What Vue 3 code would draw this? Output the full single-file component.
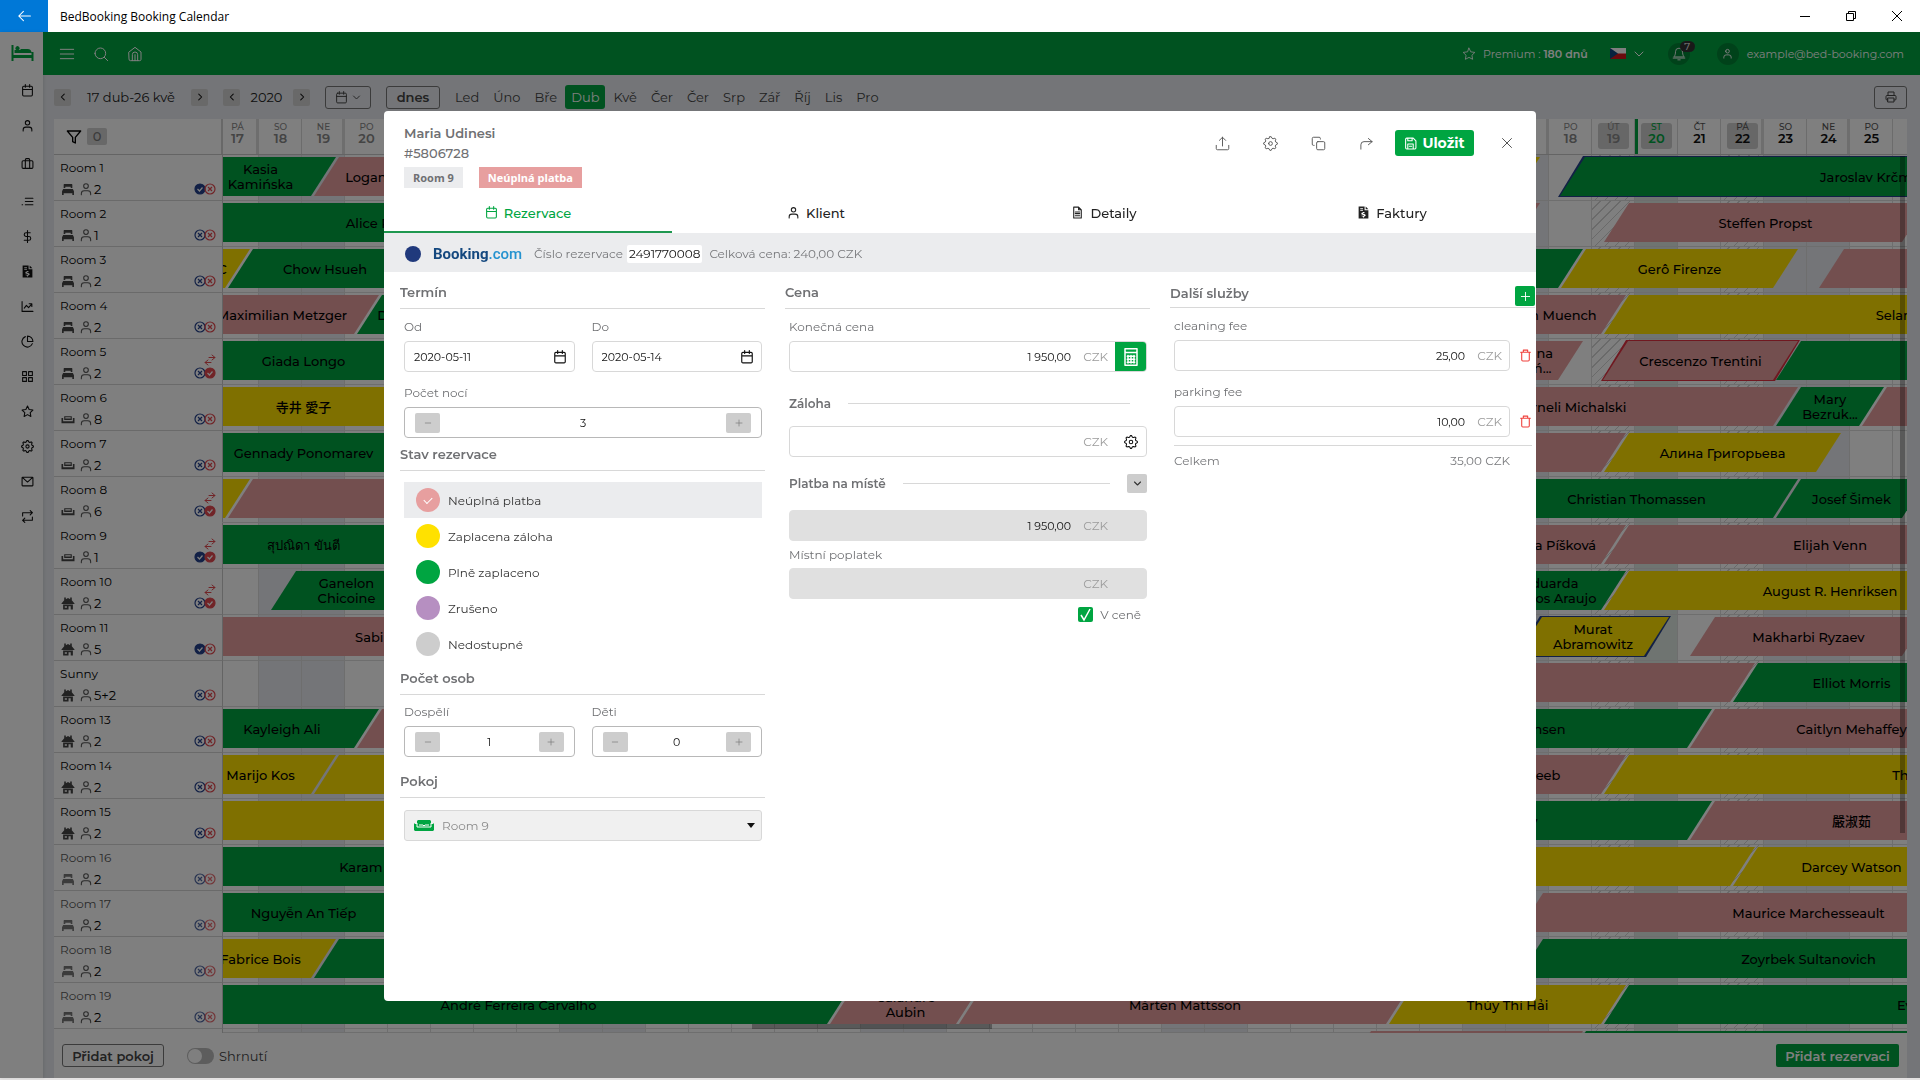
<script setup>
import { h } from 'vue'

const circle = (x, y, r) => `M${x - r} ${y}a${r} ${r} 0 1 0 ${2 * r} 0a${r} ${r} 0 1 0 ${-2 * r} 0z`
// Eight-toothed cog outline
const cog = 'M' + Array.from({ length: 32 }, (_, i) => {
  const r = i % 4 < 2 ? 11 : 8.6
  const a = ((i - 0.5) * Math.PI) / 16
  return `${(12 + r * Math.sin(a)).toFixed(1)} ${(12 - r * Math.cos(a)).toFixed(1)}`
}).join('L') + 'z'
const icons = {
  menu: 'M2 5h20M2 12h20M2 19h20',
  search: circle(11, 11, 8) + 'M17 17l5 5',
  home: 'M3 9l9-7 9 7v11a2 2 0 0 1-2 2H5a2 2 0 0 1-2-2zM8 22V13a4 4 0 0 1 8 0v9M12 13v9',
  calendar: 'M5 4h14a2 2 0 0 1 2 2v14a2 2 0 0 1-2 2H5a2 2 0 0 1-2-2V6a2 2 0 0 1 2-2zM8 1v5M16 1v5M3 10h18',
  user: circle(12, 7, 4) + 'M4 22v-2a5 5 0 0 1 5-5h6a5 5 0 0 1 5 5v2',
  case: 'M4 7h16a2 2 0 0 1 2 2v10a2 2 0 0 1-2 2H4a2 2 0 0 1-2-2V9a2 2 0 0 1 2-2zM8 21V5a2 2 0 0 1 2-2h4a2 2 0 0 1 2 2v16',
  list: 'M8 6h14M8 12h14M8 18h14M2 18h1',
  dollar: 'M12 1v22M17 5H9.500a3.500 3.500 0 0 0 0 7h5a3.500 3.500 0 0 1 0 7H6',
  chart: 'M2 3v18h20M6 15l4-5 4 4 6-7M15 7h5v5',
  pie: 'M21 16A10 10 0 1 1 8 3M22 12A10 10 0 0 0 12 2v10z',
  grid: 'M3 3h7v7H3zM14 3h7v7h-7zM14 14h7v7h-7zM3 14h7v7H3z',
  star: 'M12 2l3 6.300 7 1-5 4.900 1.200 6.900L12 17.800l-6.200 3.300L7 14.200 2 9.300l7-1z',
  gear: cog + circle(12, 12, 3),
  mail: 'M3 4h18a1 1 0 0 1 1 1v14a1 1 0 0 1-1 1H3a1 1 0 0 1-1-1V5a1 1 0 0 1 1-1zM3 5l9 8 9-8',
  sync: 'M17 1l4 4-4 4M3 11V5h18M7 23l-4-4 4-4M21 13v6H3',
  left: 'M15 5l-7 7 7 7',
  right: 'M9 5l7 7-7 7',
  down: 'M4 8l8 8 8-8',
  funnel: 'M2 3h20l-8 9.500V21l-4-2v-6.500z',
  print: 'M6 9V2h12v7M6 18H4a2 2 0 0 1-2-2v-5a2 2 0 0 1 2-2h16a2 2 0 0 1 2 2v5a2 2 0 0 1-2 2h-2M6 14h12v8H6z',
  bell: 'M18 8A6 6 0 0 0 6 8c0 7-3 9-3 9h18s-3-2-3-9M2 19h20M10 22h4',
  upload: 'M2 15v5a2 2 0 0 0 2 2h16a2 2 0 0 0 2-2v-5M7 7l5-5 5 5M12 2v14',
  copy: 'M11 9h9a2 2 0 0 1 2 2v9a2 2 0 0 1-2 2h-9a2 2 0 0 1-2-2v-9a2 2 0 0 1 2-2zM5 15H4a2 2 0 0 1-2-2V4a2 2 0 0 1 2-2h9a2 2 0 0 1 2 2v1',
  forward: 'M15 4l6 5-6 5M3 21v-7a5 5 0 0 1 5-5h13',
  save: 'M5 2h12l5 5v13a2 2 0 0 1-2 2H5a2 2 0 0 1-2-2V4a2 2 0 0 1 2-2zM7 22v-9h10v9M7 2v5h8V3M10 17h4',
  close: 'M3 3l18 18M21 3L3 21',
  plus: 'M12 3v18M3 12h18',
  minus: 'M4 12h16',
  trash: 'M3 6h18M5 6v14a2 2 0 0 0 2 2h10a2 2 0 0 0 2-2V6M8 6V2h8v4',
  file: 'M5 2h9l5 5v15H5zM14 2v5h5M8 11h8M8 14h8M8 18h8',
  swap: 'M8 22l-6-5 6-5M2 17h12M16 2l6 5-6 5M22 7H10',
  arrow: 'M11 4l-8 8 8 8M3 12h20',
  calc: 'M4 1h16v22H4zM5 6h14M7 11h10M7 15h10M7 19h10M8 10v10M12 10v10M16 10v10',
}
const solid = {
  invoice: 'M3 1h11v7h7v15H3zM16 1l5 5h-5zM6 4v2h5V4zM6 8v1h5V8zM13 11h-2v1c-2 0-3 1-3 2.500 0 3 5 1.500 5 3 0 1-3.500.5-4.500 0V19l2.500.5V21h2v-1.500c2-.3 3-1.300 3-2.500 0-3-5-2-5-3.300 0-.8 2.500-.7 3.500-.2v-1.500L13 11.800z',
  bed: 'M5 2h14a1 1 0 0 1 1 1v6h-3V7H7v2H4V3a1 1 0 0 1 1-1zM3 11h18l2 4v7h-3v-3H4v3H1v-7z',
  sofa: 'M0 9h3v6h18V9h3v10H0zM5 6h14v7H5zM7 8v1h10V8zM7 11h10v-1H7z',
  house: 'M5 1h3v3l4-2 4 2V1h3v5l5 6v1H0v-1l5-6zM3 14h18v9h-4v-6h-4v6H3zM6 17v3h4v-3z',
}
const Icon = (props) => {
  const fill = solid[props.name]
  return h('svg', { viewBox: '0 0 24 24', 'aria-hidden': 'true', fill: fill ? 'currentColor' : 'none', 'fill-rule': 'evenodd', stroke: fill ? 'none' : 'currentColor', 'stroke-width': props.weight || 2, 'stroke-linecap': 'round', 'stroke-linejoin': 'round' },
    [h('path', { d: fill || icons[props.name] })])
}
Icon.props = ['name', 'weight']

const nav = ['calendar', 'user', 'case', 'list', 'dollar', 'invoice', 'chart', 'pie', 'grid', 'star', 'gear', 'mail', 'sync']
const months = ['Led', 'Úno', 'Bře', 'Dub', 'Kvě', 'Čer', 'Čer', 'Srp', 'Zář', 'Říj', 'Lis', 'Pro']

// Day 0 is Friday 17 April; the track also holds LEAD hidden days before it.
const LEAD = 10
const weekdays = ['PÁ', 'SO', 'NE', 'PO', 'ÚT', 'ST', 'ČT']
const days = Array.from({ length: 41 }, (_, k) => ({
  k,
  wd: weekdays[k % 7],
  num: k < 14 ? k + 17 : k - 13,
  past: k < 33,
  today: k === 33,
  weekend: k % 7 === 1 || k % 7 === 2,
  edge: k % 7 === 0 || k % 7 === 2,
  holiday: k === 32 || k === 35,
  label: k < 39,
}))

// Bars: [first day, last day, colour, lines of the label, options]
const rooms = [
  { name: 'Room 1', kind: 'bed', n: '2', b: 1, bars: [[-1, 2, 'green', ['Kasia', 'Kamińska']], [2, 5, 'pink', ['Logan Brown']], [26, 30, 'yellow'], [31, 45, 'green', ['Jaroslav Krčmář'], { line: 'navy' }]] },
  { name: 'Room 2', kind: 'bed', n: '1', bars: [[-1, 8, 'green', ['Alice Roberts']], [27, 30, 'pink'], [32, 39, 'pink', ['Steffen Propst']]] },
  { name: 'Room 3', kind: 'bed', n: '2', bars: [[-3, 0, 'yellow', ['Luca Moretti CC']], [0, 4, 'green', ['Chow Hsueh']], [27, 31, 'green'], [31, 36, 'yellow', ['Gerô Firenze']], [37, 47, 'pink']] },
  { name: 'Room 4', kind: 'bed', n: '2', bars: [[-1, 3, 'pink', ['Maximilian Metzger']], [3, 5, 'green', ['Dan Miller']], [29, 32, 'pink', ['Karin Muench']], [32, 46, 'yellow', ['Selamawit T']]] },
  { name: 'Room 5', kind: 'bed', n: '2', r: 1, bars: [[-1, 4, 'green', ['Giada Longo']], [29, 31, 'pink', ['Joanna', 'Zieliń...']], [32, 36, 'pink', ['Crescenzo Trentini'], { line: 'red' }], [36, 50, 'green']] },
  { name: 'Room 6', kind: 'sofa', n: '8', bars: [[-1, 4, 'yellow', ['寺井 愛子']], [25, 36, 'pink', ['Korneli Michalski'], { shift: 40 }], [36, 38, 'green', ['Mary', 'Bezruk...']], [38, 48, 'pink']] },
  { name: 'Room 7', kind: 'sofa', n: '2', bars: [[-1, 4, 'green', ['Gennady Ponomarev']], [26, 32, 'pink'], [32, 37, 'yellow', ['Алина Григорьева']]] },
  { name: 'Room 8', kind: 'sofa', n: '6', r: 1, open: 1, bars: [[-3, 0, 'yellow'], [0, 10, 'pink'], [29, 36, 'green', ['Christian Thomassen']], [36, 39, 'green', ['Josef Šimek']]] },
  { name: 'Room 9', kind: 'sofa', n: '1', b: 1, r: 1, bars: [[-1, 4, 'green', ['สุปณิดา ขันตี']], [29, 32, 'pink', ['Alena Píšková']], [32, 42, 'pink', ['Elijah Venn']]] },
  { name: 'Room 10', kind: 'house', n: '2', r: 1, bars: [[1, 4, 'green', ['Ganelon', 'Chicoine']], [29, 32, 'green', ['Eduarda', 'Ramos Araujo']], [32, 42, 'yellow', ['August R. Henriksen']]] },
  { name: 'Room 11', kind: 'house', n: '5', b: 1, bars: [[-1, 8, 'pink', ['Sabire Kos']], [30, 33, 'yellow', ['Murat', 'Abramowitz'], { line: 'navy' }], [34, 39, 'pink', ['Makharbi Ryzaev']]] },
  { name: 'Sunny', kind: 'house', n: '5+2', bars: [[26, 35, 'pink'], [35, 40, 'green', ['Elliot Morris']]] },
  { name: 'Room 13', kind: 'house', n: '2', bars: [[-1, 3, 'green', ['Kayleigh Ali']], [3, 9, 'pink'], [25, 34, 'green', ['Emilia Johansen'], { shift: 8 }], [34, 41, 'pink', ['Caitlyn Mehaffey']]] },
  { name: 'Room 14', kind: 'house', n: '2', bars: [[-1, 2, 'yellow', ['Marijo Kos']], [2, 9, 'yellow'], [27, 32, 'pink', ['Ahmad Rakeeb'], { shift: 4 }], [32, 47, 'yellow', ['Theodor Berg']]] },
  { name: 'Room 15', kind: 'house', n: '2', bars: [[-1, 12, 'yellow'], [25, 34, 'green', ['Tomy'], { shift: 24 }], [34, 41, 'pink', ['嚴淑茹']]] },
  { name: 'Room 16', kind: 'bed', n: '2', soft: 1, bars: [[-1, 8, 'green', ['Karam Youssefi']], [26, 35, 'yellow'], [35, 40, 'yellow', ['Darcey Watson']]] },
  { name: 'Room 17', kind: 'bed', n: '2', soft: 1, bars: [[-1, 4, 'green', ['Nguyễn An Tiếp']], [30, 43, 'pink', ['Maurice Marchesseault']]] },
  { name: 'Room 18', kind: 'bed', n: '2', soft: 1, bars: [[-1, 2, 'yellow', ['Fabrice Bois']], [2, 9, 'green'], [30, 43, 'green', ['Zoyrbek Sultanovich']]] },
  { name: 'Room 19', kind: 'bed', n: '2', soft: 1, bars: [[-1, 14, 'green', ['André Ferreira Carvalho']], [14, 17, 'pink', ['Calandre', 'Aubin']], [17, 27, 'pink', ['Mårten Mattsson']], [27, 32, 'yellow', ['Thúy Thi Hải']], [32, 47, 'green', ['Eva Horákov']]] },
  { name: '', bars: [[26, 31, 'pink'], [31, 47, 'green']] },
]
const place = ([s, e]) => ({ gridColumn: `${s + LEAD + 1} / ${e + LEAD + 1}` })

const states = [
  ['Neúplná platba', '#e79f9f'],
  ['Zaplacena záloha', '#ffe100'],
  ['Plně zaplaceno', '#00a541'],
  ['Zrušeno', '#b68fc1'],
  ['Nedostupné', '#cdcdcd'],
]
const tabs = [['Rezervace', 'calendar'], ['Klient', 'user'], ['Detaily', 'file'], ['Faktury', 'invoice']]
const people = [['Dospělí', '1', 'adults'], ['Děti', '0', 'kids']]
const services = [['cleaning fee', '25,00', 'clean'], ['parking fee', '10,00', 'park']]
</script>

<template>
  <div class="window">
    <header class="titlebar">
      <button class="back" aria-label="Back"><Icon name="arrow" weight="1.800" /></button>
      <span class="wintitle">BedBooking Booking Calendar</span>
      <button class="wc" aria-label="Minimize"><svg viewBox="0 0 10 10"><path d="M0 5.500h10" /></svg></button>
      <button class="wc" aria-label="Restore"><svg viewBox="0 0 10 10"><path d="M.5 2.500h7v7h-7zM2.500 2.500v-2h7v7h-2" /></svg></button>
      <button class="wc" aria-label="Close"><svg viewBox="0 0 10 10"><path d="M0 0l10 10M10 0L0 10" /></svg></button>
    </header>

    <div class="workspace">
      <nav class="side">
        <a href="#" class="logo" aria-label="BedBooking">
          <svg viewBox="0 0 22 16"><path d="M0 0h2v10h18V7h2v9h-2v-3H2v3H0zM3 8V5h2a2 2 0 1 1 2 0h2v3zM9 4h7a4 4 0 0 1 4 4H9z" /></svg>
        </a>
        <a v-for="n in nav" :key="n" href="#" :class="['navlink', n]" :aria-label="n"><Icon :name="n" /></a>
      </nav>

      <div class="main">
        <div class="topbar">
          <button class="tool" aria-label="Menu"><Icon name="menu" weight="1.500" /></button>
          <button class="tool" aria-label="Hledat"><Icon name="search" weight="1.500" /></button>
          <button class="tool" aria-label="Domů"><Icon name="home" weight="1.500" /></button>
          <div class="account">
            <Icon name="star" weight="1.500" class="i14" />
            <span class="premium">Premium : <b>180 dnů</b></span>
            <svg class="flag" viewBox="0 0 16 11"><path fill="#fff" d="M0 0h16v6H0z" /><path fill="#d7141a" d="M0 5.500h16V11H0z" /><path fill="#11457e" d="M0 0l8 5.500L0 11z" /></svg>
            <Icon name="down" class="i12 lang" />
            <span class="disc"><Icon name="bell" weight="1.500" class="i14" /><span class="count">7</span></span>
            <span class="disc"><Icon name="user" class="i11" /></span>
            <span class="mail">example@bed-booking.com</span>
          </div>
        </div>

        <div class="content">
          <div class="toolbar">
            <button class="step" aria-label="Zpět"><Icon name="left" weight="2.500" /></button>
            <span class="range">17 dub-26 kvě</span>
            <button class="step" aria-label="Vpřed"><Icon name="right" weight="2.500" /></button>
            <button class="step year-prev" aria-label="Předchozí rok"><Icon name="left" weight="2.500" /></button>
            <span class="year">2020</span>
            <button class="step" aria-label="Další rok"><Icon name="right" weight="2.500" /></button>
            <button class="outline pick" aria-label="Kalendář"><Icon name="calendar" weight="1.800" class="i13" /><Icon name="down" class="i9" weight="2.500" /></button>
            <button class="outline today">dnes</button>
            <button v-for="(m, i) in months" :key="i" :class="['month', { on: i === 3 }]">{{ m }}</button>
            <button class="outline print" aria-label="Tisk"><Icon name="print" class="i12" /></button>
          </div>

          <div class="board">
            <div class="row head">
              <div class="room filter"><Icon name="funnel" class="i16" /><span class="zero">0</span></div>
              <div class="view">
                <div class="track">
                  <div v-for="d in days" :key="d.k" :style="place([d.k, d.k + 1])" :class="['day', { past: d.past, now: d.today, edge: d.edge, holiday: d.holiday }]">
                    <div v-if="d.label" class="chip"><span class="wd">{{ d.wd }}</span><span>{{ d.num }}</span></div>
                  </div>
                </div>
              </div>
            </div>
            <div v-for="r in rooms" :key="r.name" :class="['row', { soft: r.soft, open: r.open, last: !r.name }]">
              <div class="room">
                <template v-if="r.name">
                  <div class="rname">{{ r.name }}</div>
                  <div class="info">
                    <Icon :name="r.kind" class="kind" /><Icon name="user" class="who" weight="1.800" /><span>{{ r.n }}</span>
                    <div class="sync-state">
                      <Icon v-if="r.r" name="swap" class="swap" />
                      <svg v-for="c in [['blue', r.b], ['rose', r.r]]" :key="c[0]" viewBox="0 0 12 12" :class="['mark', c[0], { full: c[1] }]">
                        <circle cx="6" cy="6" r="5" /><path v-if="c[1]" d="M3.500 6l2 2 3-3.500" /><path v-else d="M4 4l4 4M8 4L4 8" />
                      </svg>
                    </div>
                  </div>
                </template>
              </div>
              <div class="view">
                <div class="track">
                  <div v-for="d in days" :key="d.k" :style="place([d.k, d.k + 1])" :class="['cell', { weekend: d.weekend, now: d.today, holiday: d.holiday }]"></div>
                  <div v-for="(b, i) in r.bars" :key="'b' + i" :style="place(b)" :class="['bar', b[2], b[4] && b[4].line]">
                    <div v-if="b[3]" class="label" :style="b[4] && b[4].shift ? { paddingLeft: b[4].shift + 'px' } : null">
                      <div v-for="t in b[3]" :key="t">{{ t }}</div>
                    </div>
                  </div>
                </div>
              </div>
            </div>
            <div class="vthumb"></div>
            <div class="hthumb"></div>
          </div>

          <footer class="foot">
            <button class="outline add-room">Přidat pokoj</button>
            <label class="sum"><input type="checkbox" role="switch" class="switch" />Shrnutí</label>
            <button class="add-res">Přidat rezervaci</button>
          </footer>
        </div>
      </div>
      <div class="scrim"></div>
    </div>
    <div class="taskline"></div>

    <section class="modal" role="dialog" aria-label="Rezervace">
      <div class="mhead">
        <div>
          <div class="guest">Maria Udinesi</div>
          <div class="resid">#5806728</div>
          <div class="tags"><span class="tag">Room 9</span><span class="tag unpaid">Neúplná platba</span></div>
        </div>
        <div class="actions">
          <button v-for="a in ['upload', 'gear', 'copy', 'forward']" :key="a" class="act" :aria-label="a"><Icon :name="a" weight="1.500" /></button>
          <button class="save"><Icon name="save" class="i13" />Uložit</button>
          <button class="act" aria-label="Zavřít"><Icon name="close" /></button>
        </div>
      </div>
      <div class="tabs" role="tablist">
        <button v-for="(t, i) in tabs" :key="t[0]" role="tab" :aria-selected="i === 0" :class="['tab', { on: i === 0 }]"><Icon :name="t[1]" class="i13" />{{ t[0] }}</button>
      </div>
      <div class="band">
        <span class="dot"></span>
        <span class="brand">Booking<i>.com</i></span>
        <span>Číslo rezervace</span><span class="code">2491770008</span><span>Celková cena: 240,00 CZK</span>
      </div>

      <div class="cols">
        <div class="col">
          <h2>Termín</h2>
          <div class="pair">
            <div v-for="f in [['Od', '2020-05-11', 'from'], ['Do', '2020-05-14', 'to']]" :key="f[2]" class="field">
              <label :for="f[2]">{{ f[0] }}</label>
              <div class="box"><input :id="f[2]" type="text" :value="f[1]" /><Icon name="calendar" class="i14 cal" /></div>
            </div>
          </div>
          <div class="field nights">
            <label for="nights">Počet nocí</label>
            <div class="box stepper"><button aria-label="Méně"><Icon name="minus" /></button><input id="nights" type="text" value="3" /><button aria-label="Více"><Icon name="plus" /></button></div>
          </div>
          <h2 class="h-state">Stav rezervace</h2>
          <div class="states">
            <label v-for="(s, i) in states" :key="s[0]" :class="['state', { on: i === 0 }]">
              <input type="radio" name="state" :checked="i === 0" :style="{ background: s[1] }" />{{ s[0] }}
            </label>
          </div>
          <h2 class="h-people">Počet osob</h2>
          <div class="pair">
            <div v-for="p in people" :key="p[2]" class="field">
              <label :for="p[2]">{{ p[0] }}</label>
              <div class="box stepper"><button aria-label="Méně"><Icon name="minus" /></button><input :id="p[2]" type="text" :value="p[1]" /><button aria-label="Více"><Icon name="plus" /></button></div>
            </div>
          </div>
          <h2 class="h-room">Pokoj</h2>
          <div class="pick-room">
            <svg class="couch" viewBox="0 0 20 11"><path fill="#00a541" d="M4 0h12l1 1v3h2l1-1v7l-1 1H1l-1-1V3l1 1h2V1z" /><path fill="none" stroke="#fff" d="M3 3v4h14V3M5 5h4l1 1 1-1h4" /></svg>
            <select aria-label="Pokoj" disabled><option>Room 9</option></select>
            <span class="caret"></span>
          </div>
        </div>

        <div class="col">
          <h2>Cena</h2>
          <div class="field">
            <label for="price">Konečná cena</label>
            <div class="box money joined"><input id="price" type="text" value="1 950,00" /><span>CZK</span><button aria-label="Kalkulačka"><Icon name="calc" class="i18" /></button></div>
          </div>
          <h3 class="advance">Záloha</h3>
          <div class="field"><div class="box money end"><input type="text" aria-label="Záloha" value="" /><span>CZK</span><button aria-label="Nastavení zálohy"><Icon name="gear" weight="1.800" class="i14" /></button></div></div>
          <h3 class="onsite">Platba na místě<button aria-label="Sbalit"><Icon name="down" weight="3" class="i9" /></button></h3>
          <div class="field"><div class="box money off"><input type="text" aria-label="Platba na místě" value="1 950,00" disabled /><span>CZK</span></div></div>
          <div class="field local">
            <label for="local">Místní poplatek</label>
            <div class="box money off"><input id="local" type="text" value="" disabled /><span>CZK</span></div>
          </div>
          <label class="incl"><span class="tick"><input type="checkbox" checked /><svg viewBox="0 0 15 15"><path d="M3 8l3 5 6-11" /></svg></span>V ceně</label>
        </div>

        <div class="col extra">
          <h2>Další služby<button aria-label="Přidat službu"><Icon name="plus" class="i11" /></button></h2>
          <div v-for="s in services" :key="s[2]" class="field service">
            <label :for="s[2]">{{ s[0] }}</label>
            <div class="line">
              <div class="box money"><input :id="s[2]" type="text" :value="s[1]" /><span>CZK</span></div>
              <button class="del" aria-label="Smazat"><Icon name="trash" class="i13" /></button>
            </div>
          </div>
          <div class="total"><span>Celkem</span><span>35,00 CZK</span></div>
        </div>
      </div>
    </section>
  </div>
</template>

<style>
body { margin: 0; background: #fff; }
</style>

<style scoped>
* { box-sizing: border-box; }
.window { min-height: 100vh; display: flex; flex-direction: column; font-family: Montserrat, Inter, "Noto Sans CJK SC", sans-serif; font-size: 13px; color: #111; overflow: hidden; }
button { font: inherit; color: inherit; background: none; border: 0; padding: 0; display: flex; align-items: center; justify-content: center; }
input, select { font: inherit; color: inherit; }
a { color: inherit; }
svg { display: block; flex: none; }
.i9 { width: 9px; height: 9px; } .i11 { width: 11px; height: 11px; } .i12 { width: 12px; height: 12px; }
.i13 { width: 13px; height: 13px; } .i14 { width: 14px; height: 14px; } .i16 { width: 16px; height: 16px; } .i18 { width: 18px; height: 18px; }

.titlebar { height: 32px; display: flex; align-items: center; background: #fff; font-family: "Open Sans", "Noto Sans", sans-serif; font-size: 12px; color: #000; }
.back { width: 48px; height: 32px; background: #0078d7; color: #fff; }
.back svg { width: 14px; height: 14px; }
.wintitle { margin-left: 12px; margin-right: auto; }
.wc { width: 46px; height: 32px; }
.wc svg { width: 10px; height: 10px; overflow: visible; fill: none; stroke: #000; stroke-width: 1; }

.workspace { position: relative; flex: 1; display: flex; background: #e8ebf0; }
.scrim { position: absolute; z-index: 3; inset: 0; background: rgba(0, 0, 0, .5); }
.taskline { height: 2px; background: #e4e2e2; }
.side { width: 43px; background: #fff; display: flex; flex-direction: column; align-items: flex-end; padding: 13px 9px 0 0; box-shadow: 1px 0 3px rgba(0, 0, 0, .1); }
.logo { margin-bottom: 12px; }
.logo svg { width: 23px; height: 16px; fill: #00a541; fill-rule: evenodd; }
.navlink { padding: 11px 0; }
.navlink svg { width: 13px; height: 13px; }
.navlink.case, .navlink.list { margin-top: 3px; }
.main { flex: 1; min-width: 0; display: flex; flex-direction: column; }
.topbar { height: 43px; background: #00a541; color: #fff; display: flex; align-items: center; padding: 0 16px; gap: 18px; font-size: 11px; }
.tool svg { width: 16px; height: 16px; }
.account { margin-left: auto; display: flex; align-items: center; }
.premium { margin-left: 7px; }
.premium b { font-weight: 600; }
.flag { width: 16px; height: 11px; margin-left: 22px; }
.lang { margin: 0 23px 0 7px; }
.disc { position: relative; width: 22px; height: 22px; border-radius: 50%; background: #008435; display: flex; align-items: center; justify-content: center; margin-right: 27px; }
.disc + .mail { margin-left: -19px; }
.count { position: absolute; top: -2px; left: 12px; width: 15px; height: 11px; border-radius: 6px; background: #333; font-size: 10px; line-height: 11px; text-align: center; }

.content { flex: 1; padding: 0 13px 0 11px; display: flex; flex-direction: column; }
.toolbar { height: 44px; display: flex; align-items: center; color: #222; }
.step { width: 17px; height: 17px; background: #d2d2d2; border-radius: 2px; flex: none; color: #111; }
.step svg { width: 10px; height: 10px; }
.range { width: 120px; text-align: center; }
.year-prev { margin-left: 15px; }
.year { width: 53px; text-align: center; }
.outline { height: 23px; border: 1px solid #777; border-radius: 3px; font-weight: 600; color: #444; }
.pick { width: 46px; margin-left: 15px; gap: 4px; }
.today { width: 54px; margin: 0 9px 0 15px; }
.month { height: 24px; padding: 0 6px; margin-right: 2px; border-radius: 3px; color: #444; }
.month.on { background: #00a541; color: #fff; }
.print { width: 33px; margin-left: auto; }

.board { position: relative; background: #fff; }
.row { display: flex; height: 46px; }
.row.head { height: 36px; border-bottom: 1px solid #c8c8c8; }
.row.last { height: 4px; overflow: hidden; }
.room { width: 169px; flex: none; border-right: 1px solid #c8c8c8; border-bottom: 1px solid #d4d4d4; padding: 4px 6px 0; color: #000; display: flex; flex-direction: column; }
.open .room { border-bottom-color: #fff; }
.head .room { border-bottom: 0; border-right: 2px solid #d0d0d0; }
.soft .room { color: #555; }
.filter { flex-direction: row; align-items: center; gap: 5px; padding: 0 12px; }
.zero { width: 20px; height: 17px; line-height: 17px; background: #d0d0d0; border-radius: 2px; text-align: center; color: #777; font-weight: 500; }
.rname { font-size: 12px; line-height: 18px; }
.info { display: flex; align-items: center; height: 22px; color: #000; margin-top: 1px; }
.kind { width: 14px; height: 13px; color: #444; margin: 0 4px 0 1px; }
.soft .kind { color: #777; }
.who { width: 14px; height: 14px; color: #555; margin-right: 1px; }
.sync-state { position: relative; margin-left: auto; display: flex; }
.swap { position: absolute; right: 0; bottom: 13px; width: 12px; height: 12px; color: #e2484f; }
.mark { width: 12px; height: 12px; margin-left: -2px; fill: none; stroke-width: 1.2; }
.blue { stroke: #24418c; } .rose { stroke: #e2484f; }
.blue.full circle { fill: #24418c; } .rose.full circle { fill: #e2484f; }
.full path { stroke: #fff; }
.soft .mark { opacity: .8; }
.view { flex: 1; min-width: 0; overflow: hidden; display: flex; }
.track { display: grid; grid-template-columns: repeat(62, 43px); grid-template-rows: 100%; margin-left: -437px; flex: none; }
.track > * { grid-row: 1; }
.day { border-right: 1px solid #d8d8d8; padding: 4px 5px 4px 6px; text-align: center; font-weight: 600; color: #111; }
.day.edge { border-right: 3px solid #dcdcdc; padding-right: 3px; }
.chip { display: flex; flex-direction: column; height: 26px; line-height: 14px; border-radius: 3px; }
.wd { font-size: 9px; line-height: 8px; font-weight: 500; color: #555; }
.day.past, .day.past .wd { color: #888; }
.day.holiday .chip, .day.now .chip { background: #cfcfcf; }
.day.now { border-left: 3px solid #00a541; padding-left: 3px; }
.day.now, .day.now .wd { color: #00a541; }
.cell { border-right: 1px solid #dcdcdc; border-bottom: 1px solid #dcdcdc; }
.cell.weekend { background: #e8ebf0; }
.cell.now { background: #dfe8e2; }
.cell.holiday { background: repeating-linear-gradient(-45deg, #fff 0 6px, #d4d4d4 6px 7px); }
.bar { position: relative; height: 39px; margin: 2px -34px 0 12px; clip-path: polygon(25px 0, 100% 0, calc(100% - 25px) 100%, 0 100%); z-index: 1; }
.green, .green::before { background: #00a541; } .pink, .pink::before { background: #e79f9f; } .yellow, .yellow::before { background: #ffe100; }
.bar.navy { background: #24418c; } .bar.red { background: #e03040; }
.navy, .red { height: 41px; margin: 1px -36px 0 9px; }
.navy::before, .red::before { content: ""; position: absolute; inset: 1px 2px; clip-path: polygon(25px 0, 100% 0, calc(100% - 25px) 100%, 0 100%); }
.label { position: relative; height: 100%; display: flex; flex-direction: column; align-items: center; justify-content: center; font-weight: 500; line-height: 15px; white-space: nowrap; color: #000; padding-top: 1px; }
.vthumb { position: absolute; z-index: 2; right: 2px; top: 37px; width: 5px; height: 677px; background: rgba(0, 0, 0, .3); }
.hthumb { position: absolute; z-index: 2; left: 698px; bottom: 4px; width: 240px; height: 5px; background: rgba(0, 0, 0, .3); }
.foot { flex: 1; min-height: 45px; background: #fff; display: flex; align-items: center; padding: 0 8px; color: #444; }
.add-room { width: 102px; }
.sum { display: flex; align-items: center; gap: 5px; margin-left: 23px; }
.switch { appearance: none; margin: 0; width: 27px; height: 16px; border-radius: 8px; background: #bbb; display: flex; align-items: center; padding: 0 1px; }
.switch::before { content: ""; width: 14px; height: 14px; border-radius: 50%; background: #fff; }
.add-res { margin-left: auto; width: 123px; height: 23px; border-radius: 2px; background: #00a541; color: #fff; font-weight: 600; }

.modal { position: fixed; z-index: 5; top: 111px; left: 20%; width: 60%; height: calc(100vh - 190px); background: #fff; border-radius: 4px; color: #333; font-size: 12px; }
.mhead { height: 79px; display: flex; justify-content: space-between; padding: 12px 20px 0; }
.guest { font-size: 13px; line-height: 20px; font-weight: 600; color: #6f7073; }
.resid { font-size: 13px; line-height: 20px; color: #6f7073; font-weight: 500; }
.tags { display: flex; gap: 16px; margin-top: 4px; font-family: "Open Sans", "Noto Sans", sans-serif; font-weight: 700; font-size: 11px; }
.tag { height: 21px; line-height: 21px; padding: 0 9px; background: #ebecee; color: #6f7073; }
.tag.unpaid { background: #e79f9f; color: #fff; }
.actions { display: flex; align-items: center; height: 40px; }
.act { width: 18px; height: 18px; margin-right: 30px; color: #555; }
.act svg { width: 15px; height: 15px; }
.act:last-child { margin: 0 0 0 24px; }
.act:last-child svg { width: 12px; height: 12px; }
.save { width: 79px; height: 26px; margin-left: -10px; background: #00a541; color: #fff; border-radius: 3px; font-size: 14px; font-weight: 700; gap: 5px; }
.tabs { display: flex; height: 43px; }
.tab { flex: 1; gap: 6px; font-size: 13px; font-weight: 500; color: #222; padding-top: 4px; border-bottom: 2px solid transparent; }
.tab.on { color: #00a541; border-bottom-color: #1f9850; }
.band { height: 39px; background: #ebecee; display: flex; align-items: center; padding: 2px 21px 0; color: #77787b; }
.dot { width: 16px; height: 16px; border-radius: 50%; background: #20397c; margin-right: 12px; }
.brand { font-family: Roboto, sans-serif; font-weight: 700; font-size: 15px; line-height: 20px; color: #14487f; margin-right: 12px; }
.brand i { font-style: normal; font-weight: 500; color: #2492cf; }
.code { background: #fff; color: #111; border-radius: 2px; padding: 0 2px; line-height: 18px; margin: 0 7px 0 4px; }

.cols { display: flex; gap: 20px; padding: 0 1px 0 16px; }
.col { flex: 1; min-width: 0; }
h2 { margin: 10px 0 8px; padding-bottom: 6px; border-bottom: 1px solid #d8d8d8; font-size: 13px; line-height: 20px; font-weight: 600; color: #6f7073; }
h2.h-state { margin: 6px 0 11px; }
h2.h-people { margin-top: 6px; margin-bottom: 7px; }
h2.h-room { margin: 14px 0 12px; }
.pair { display: flex; gap: 17px; margin: 0 3px 0 4px; }
.pair .field { flex: 1; min-width: 0; margin: 0; }
.field { margin: 0 3px 0 4px; }
.field label { display: block; line-height: 20px; margin-bottom: 4px; color: #6f7073; }
.nights { margin-top: 11px; }
.box { display: flex; align-items: center; height: 31px; border: 1px solid #d8d8d8; border-radius: 4px; overflow: hidden; }
.box input { flex: 1; min-width: 0; border: 0; outline: 0; background: none; padding: 0; font-size: 11px; color: #111; }
.pair .box > input:first-child { padding-left: 9px; }
.cal { margin-right: 7px; color: #111; }
.stepper { border-color: #b8b8b8; padding: 0 10px; }
.stepper input { text-align: center; }
.stepper button { width: 25px; height: 20px; border-radius: 2px; background: #cdcdcd; color: #777; }
.stepper svg { width: 8px; height: 8px; }
.states { margin: 0 3px 0 4px; }
.state { display: flex; align-items: center; height: 36px; padding-left: 12px; gap: 8px; }
.state.on { background: #ebecee; }
.state input { appearance: none; margin: 0; width: 24px; height: 24px; border-radius: 50%; display: flex; justify-content: center; padding-top: 9px; }
.state input:checked::after { content: ""; width: 7px; height: 4px; border: solid #fff; border-width: 0 0 1px 1px; transform: rotate(-45deg); }
.pick-room { position: relative; margin: 0 3px 0 4px; }
.pick-room select { appearance: none; width: 100%; height: 31px; border: 1px solid #d8d8d8; border-radius: 3px; background: #f0f0f0; color: #8a8a8a; padding-left: 37px; opacity: 1; display: block; }
.couch { position: absolute; left: 10px; top: 10px; width: 20px; height: 11px; }
.caret { position: absolute; right: 7px; top: 13px; border: 4px solid transparent; border-top: 5px solid #111; }

.money input { text-align: right; }
.money > span { margin: 0 7px 0 12px; color: #9a9a9a; }
.joined button { width: 31px; height: 31px; background: #00a541; color: #fff; }
.end button { width: 30px; color: #111; }
.end > span { margin-right: 8px; }
.off { background: #e0e0e0; border-color: #e0e0e0; }
.off > span { margin-right: 38px; }
h3 { margin: 0 3px 0 4px; display: flex; align-items: center; height: 20px; font-size: 12px; font-weight: 600; color: #6f7073; gap: 17px; }
h3::after { content: ""; flex: 1; height: 1px; background: #d8d8d8; }
.advance { margin-top: 21px; margin-bottom: 13px; padding-right: 17px; }
.onsite { margin-top: 16px; margin-bottom: 17px; }
.onsite button { order: 2; width: 20px; height: 19px; background: #cdcdcd; border-radius: 2px; color: #333; }
.local { margin-top: 4px; }
.local label { margin-bottom: 3px; }
.incl { display: flex; align-items: center; justify-content: flex-end; gap: 7px; margin: 8px 9px 0 0; color: #6f7073; }
.tick { position: relative; width: 15px; height: 15px; }
.tick input { appearance: none; display: block; margin: 0; width: 15px; height: 15px; border-radius: 2px; background: #00a541; }
.tick svg { position: absolute; inset: 0; fill: none; stroke: #fff; stroke-width: 1.5; }
.extra h2 { display: flex; justify-content: space-between; margin-top: 11px; padding-bottom: 4px; }
.extra h2 button { width: 20px; height: 20px; margin: 3px 0 -3px; background: #00a541; color: #fff; border-radius: 2px; }
.service { margin-bottom: 11px; }
.line { display: flex; align-items: center; }
.line .box { flex: 1; }
.del { width: 14px; margin-left: 8px; color: #f0413c; }
.total { display: flex; justify-content: space-between; margin: -3px 3px 0 4px; padding: 7px 22px 0 0; border-top: 1px solid #d8d8d8; color: #77787b; }
</style>
